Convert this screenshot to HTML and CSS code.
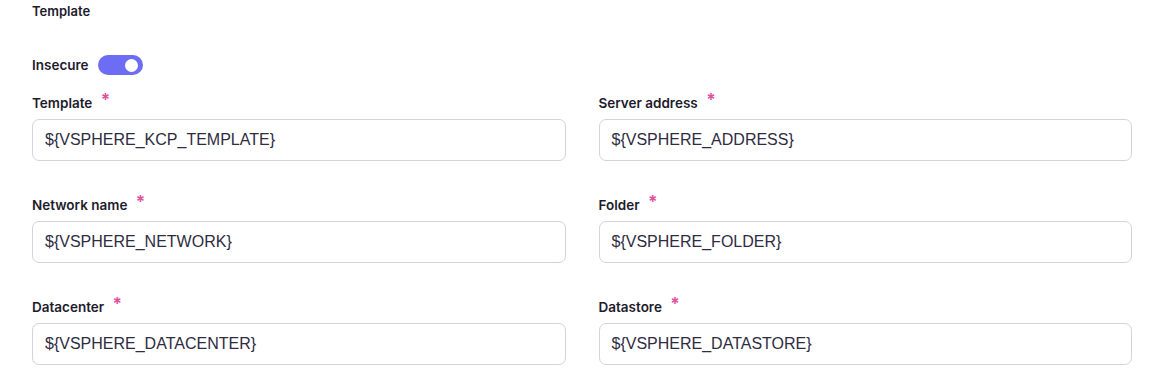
FILE: index.html
```html
<!DOCTYPE html>
<html lang="en">
<head>
    <meta charset="UTF-8">
    <title>Template</title>
    <link rel="stylesheet" href="styles.css">
</head>
<body>
    <div class="form">
        <h3 class="section">Template</h3>
        <div class="switchRow">
            <span class="label">Insecure</span>
            <span class="toggle"><span class="knob"></span></span>
        </div>
        <div class="grid">
            <div class="field">
                <label class="label">Template <span class="req">*</span></label>
                <div class="input">${VSPHERE_KCP_TEMPLATE}</div>
            </div>
            <div class="field">
                <label class="label">Server address <span class="req">*</span></label>
                <div class="input">${VSPHERE_ADDRESS}</div>
            </div>
            <div class="field">
                <label class="label">Network name <span class="req">*</span></label>
                <div class="input">${VSPHERE_NETWORK}</div>
            </div>
            <div class="field">
                <label class="label">Folder <span class="req">*</span></label>
                <div class="input">${VSPHERE_FOLDER}</div>
            </div>
            <div class="field">
                <label class="label">Datacenter <span class="req">*</span></label>
                <div class="input">${VSPHERE_DATACENTER}</div>
            </div>
            <div class="field">
                <label class="label">Datastore <span class="req">*</span></label>
                <div class="input">${VSPHERE_DATASTORE}</div>
            </div>
        </div>
    </div>
</body>
</html>
```

FILE: styles.css
```css
*{padding: 0; margin: 0; box-sizing: border-box;}
body{background: #fff; font-family: Inter, "Liberation Sans", sans-serif; color: #1d1b2c;}
.form{padding: 3px 19px 0 32px;}
.section{font-size: 13px; font-weight: 600; line-height: 16px; height: 16px;}

.label{font-size: 13.5px; font-weight: 600; line-height: 16px;}
.req{color: #e0529c; font-size: 17px; font-weight: 700; margin-left: 5px; position: relative; top: -2px;}

.switchRow{display: flex; align-items: center; gap: 9px; margin-top: 36px; height: 20px;}
.toggle{display: inline-flex; align-items: center; justify-content: flex-end; width: 45px; height: 20px; border-radius: 10px; background: #6c6cf5; padding-right: 5px;}
.toggle .knob{width: 13px; height: 13px; border-radius: 50%; background: #fff;}

.grid{display: grid; grid-template-columns: 1fr 1fr; column-gap: 33px; row-gap: 35px; margin-top: 19px;}
.field label{display: block; height: 25px;}
.input{height: 42px; border: 1px solid #d4d3dc; border-radius: 7px; padding: 0 12px; display: flex; align-items: center; font-family: "Liberation Sans", Arial, sans-serif; font-size: 16px; color: #2e2c3f;}
```
